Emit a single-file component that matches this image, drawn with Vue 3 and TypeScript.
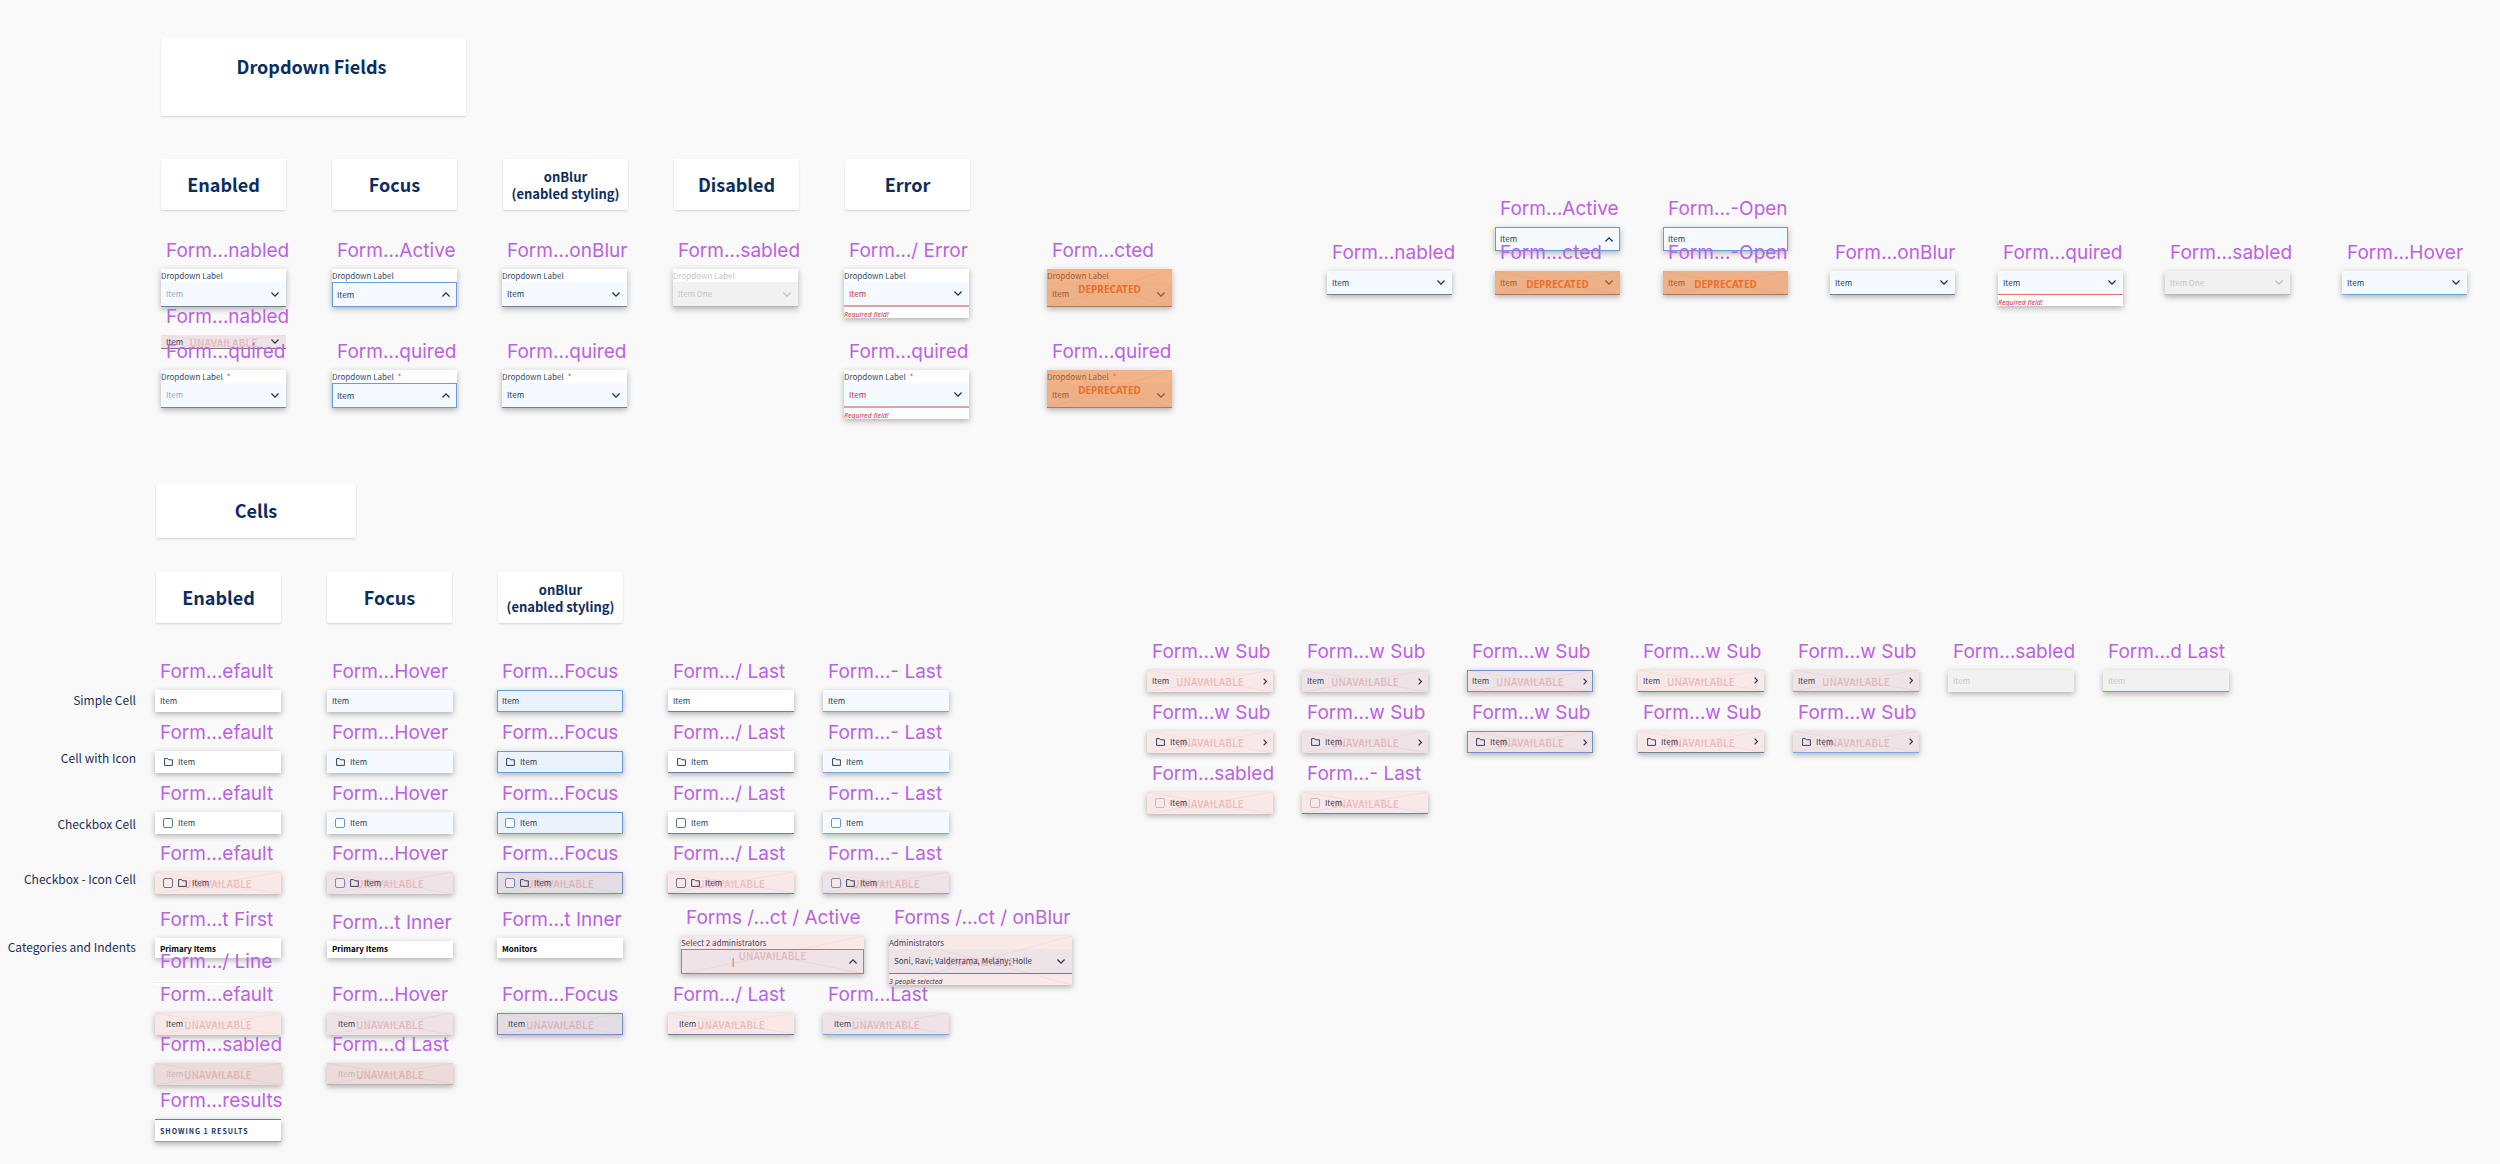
<script setup lang="ts">
type Tone = 'plain' | 'hover' | 'focus' | 'last' | 'hoverLast' | 'disabled' | 'disabledLast'
type Stamp = 'unavailable' | 'deprecated'

interface Frame {
  x: number
  y: number
  name: string
  kind: 'field' | 'cell' | 'category' | 'line' | 'results'
  text?: string
  /** caption above the field */
  caption?: string
  required?: boolean
  note?: string
  state?: 'normal' | 'placeholder' | 'active' | 'disabled' | 'error' | 'required' | 'hover'
  arrow?: 'down' | 'up' | 'faint' | 'none'
  stamp?: Stamp
  size?: 'wide' | 'slim' | 'tall'
  tone?: Tone
  check?: boolean
  folder?: boolean
  indent?: boolean
  sub?: boolean
  editable?: boolean
}

const frames: Frame[] = []
const add = (x: number, y: number, name: string, kind: Frame['kind'], rest: Partial<Frame> = {}) => {
  frames.push({ x, y, name, kind, text: 'Item', ...rest })
}

// Labelled dropdowns
const caption = 'Dropdown Label'
const deprecated: Partial<Frame> = { stamp: 'deprecated' }
add(161, 269, 'Form…nabled', 'field', { caption, state: 'placeholder' })
add(332, 269, 'Form…Active', 'field', { caption, state: 'active', arrow: 'up' })
add(502, 269, 'Form…onBlur', 'field', { caption })
add(673, 269, 'Form…sabled', 'field', { caption, state: 'disabled', text: 'Item One' })
add(844, 269, 'Form…/ Error', 'field', { caption, state: 'error', note: 'Required field!' })
add(1047, 269, 'Form…cted', 'field', { caption, ...deprecated })
add(161, 335, 'Form…nabled', 'field', { size: 'slim', stamp: 'unavailable' })
add(161, 370, 'Form…quired', 'field', { caption, required: true, state: 'placeholder' })
add(332, 370, 'Form…quired', 'field', { caption, required: true, state: 'active', arrow: 'up' })
add(502, 370, 'Form…quired', 'field', { caption, required: true })
add(844, 370, 'Form…quired', 'field', { caption, required: true, state: 'error', note: 'Required field!' })
add(1047, 370, 'Form…quired', 'field', { caption, required: true, ...deprecated })

// Bare dropdowns
add(1327, 271, 'Form…nabled', 'field')
add(1495, 227, 'Form…Active', 'field', { state: 'active', arrow: 'up' })
add(1663, 227, 'Form…-Open', 'field', { state: 'active', arrow: 'faint' })
add(1495, 271, 'Form…cted', 'field', deprecated)
add(1663, 271, 'Form…-Open', 'field', { ...deprecated, arrow: 'none' })
add(1830, 271, 'Form…onBlur', 'field')
add(1998, 271, 'Form…quired', 'field', { state: 'required', note: 'Required field!' })
add(2165, 271, 'Form…sabled', 'field', { state: 'disabled', text: 'Item One' })
add(2342, 271, 'Form…Hover', 'field', { state: 'hover' })

// Cell matrix
const columns: { x: number; name: string; tone: Tone }[] = [
  { x: 155, name: 'Form…efault', tone: 'plain' },
  { x: 327, name: 'Form…Hover', tone: 'hover' },
  { x: 497, name: 'Form…Focus', tone: 'focus' },
  { x: 668, name: 'Form…/ Last', tone: 'last' },
  { x: 823, name: 'Form…- Last', tone: 'hoverLast' },
]
const rows: { y: number; extra: Partial<Frame> }[] = [
  { y: 690, extra: {} },
  { y: 751, extra: { folder: true } },
  { y: 812, extra: { check: true } },
  { y: 872, extra: { check: true, folder: true, stamp: 'unavailable' } },
]
for (const row of rows) for (const c of columns) add(c.x, row.y, c.name, 'cell', { tone: c.tone, ...row.extra })

add(155, 938, 'Form…t First', 'category', { text: 'Primary Items', size: 'tall' })
add(327, 941, 'Form…t Inner', 'category', { text: 'Primary Items' })
add(497, 938, 'Form…t Inner', 'category', { text: 'Monitors', size: 'tall' })
add(681, 936, 'Forms /…ct / Active', 'field', {
  caption: 'Select 2 administrators', state: 'active', arrow: 'up', size: 'wide', stamp: 'unavailable', text: '|', editable: true,
})
add(889, 936, 'Forms /…ct / onBlur', 'field', {
  caption: 'Administrators', size: 'wide', stamp: 'unavailable', text: 'Soni, Ravi; Valderrama, Melany; Holle', note: '3 people selected',
})
add(155, 980, 'Form…/ Line', 'line')
for (const c of columns) {
  const name = c.tone === 'hoverLast' ? 'Form…Last' : c.name
  add(c.x, 1013, name, 'cell', { tone: c.tone, indent: true, stamp: 'unavailable' })
}
add(155, 1063, 'Form…sabled', 'cell', { tone: 'disabled', indent: true, stamp: 'unavailable' })
add(327, 1063, 'Form…d Last', 'cell', { tone: 'disabledLast', indent: true, stamp: 'unavailable' })
add(155, 1119, 'Form…results', 'results', { text: 'SHOWING 1 RESULTS' })

// Cells that open a sub menu
const subColumns: { x: number; tone: Tone }[] = [
  { x: 1147, tone: 'plain' },
  { x: 1302, tone: 'hover' },
  { x: 1467, tone: 'focus' },
  { x: 1638, tone: 'last' },
  { x: 1793, tone: 'hoverLast' },
]
for (const y of [670, 731]) {
  for (const c of subColumns) {
    add(c.x, y, 'Form…w Sub', 'cell', { tone: c.tone, sub: true, folder: y === 731, stamp: 'unavailable' })
  }
}
add(1948, 670, 'Form…sabled', 'cell', { tone: 'disabled' })
add(2103, 670, 'Form…d Last', 'cell', { tone: 'disabledLast' })
add(1147, 792, 'Form…sabled', 'cell', { tone: 'plain', check: true, stamp: 'unavailable', state: 'disabled' })
add(1302, 792, 'Form…- Last', 'cell', { tone: 'last', check: true, stamp: 'unavailable', state: 'disabled' })

const rowLabels = [
  { y: 700, text: 'Simple Cell' },
  { y: 758, text: 'Cell with Icon' },
  { y: 824, text: 'Checkbox Cell' },
  { y: 879, text: 'Checkbox - Icon Cell' },
  { y: 947, text: 'Categories and Indents' },
]

const arrowOf = (f: Frame) => f.arrow ?? 'down'
const isDisabled = (f: Frame) => f.state === 'disabled' || f.tone === 'disabled' || f.tone === 'disabledLast'
</script>

<template>
  <main class="canvas">
    <section class="group">
      <h1 class="tile tile-title">Dropdown Fields</h1>
      <div class="tiles">
        <h2 class="tile">Enabled</h2>
        <h2 class="tile">Focus</h2>
        <h2 class="tile tile-small">onBlur<br />(enabled styling)</h2>
        <h2 class="tile">Disabled</h2>
        <h2 class="tile">Error</h2>
      </div>
    </section>

    <section class="group group-cells">
      <h1 class="tile tile-cells">Cells</h1>
      <div class="tiles">
        <h2 class="tile">Enabled</h2>
        <h2 class="tile">Focus</h2>
        <h2 class="tile tile-small">onBlur<br />(enabled styling)</h2>
      </div>
    </section>

    <p v-for="r in rowLabels" :key="r.text" class="row-label" :style="{ top: r.y - 9 + 'px' }">{{ r.text }}</p>

    <article
      v-for="(f, i) in frames"
      :key="i"
      class="frame"
      :class="[f.kind, f.size]"
      :style="{ left: f.x + 'px', top: f.y - 30 + 'px' }"
    >
      <h3 class="frame-name">{{ f.name }}</h3>

      <div v-if="f.kind === 'field'" class="card" :class="[f.state ?? 'normal', { captioned: f.caption }]">
        <label v-if="f.caption" class="caption" :for="'control-' + i">
          {{ f.caption }}<span v-if="f.required" class="star">*</span>
        </label>
        <div class="control">
          <input v-if="f.editable" :id="'control-' + i" class="value value-input" type="text" :value="f.text" />
          <select v-else :id="'control-' + i" class="value" :aria-label="f.caption ? undefined : f.name" :disabled="isDisabled(f)">
            <option>{{ f.text }}</option>
          </select>
          <svg v-if="arrowOf(f) !== 'none'" class="arrow" :class="arrowOf(f)" viewBox="0 0 8 5">
            <path v-if="arrowOf(f) === 'down'" d="M.4.5 4 4.1 7.6.5" />
            <path v-else d="M.4 4.5 4 .9l3.6 3.6" />
          </svg>
        </div>
        <p v-if="f.note" class="note" :class="{ 'note-info': f.size === 'wide' }">{{ f.note }}</p>
        <div v-if="f.stamp" class="stamp" :class="f.stamp">
          <svg class="cross" viewBox="0 0 100 100" preserveAspectRatio="none"><path d="M0 0 100 100M100 0 0 100" /></svg>
          <span>{{ f.stamp.toUpperCase() }}</span>
        </div>
      </div>

      <component
        :is="f.check ? 'label' : 'button'"
        v-else-if="f.kind === 'cell'"
        class="card cell-card"
        :class="[f.tone, { indent: f.indent, 'has-sub': f.sub }]"
        :disabled="!f.check && isDisabled(f) ? true : undefined"
      >
        <input v-if="f.check" class="check" type="checkbox" :disabled="isDisabled(f)" />
        <svg v-if="f.folder" class="folder" :class="{ second: f.check }" viewBox="0 0 9 8">
          <path d="M.6.6h3l1 1.2h3.8v5.6H.6z" />
        </svg>
        <span class="cell-text">{{ f.text }}</span>
        <svg v-if="f.sub" class="sub" viewBox="0 0 4 7"><path d="M.6.6 3.4 3.5.6 6.4" /></svg>
        <span v-if="f.stamp" class="stamp" :class="f.stamp">
          <svg class="cross" viewBox="0 0 100 100" preserveAspectRatio="none"><path d="M0 0 100 100M100 0 0 100" /></svg>
          <span>{{ f.stamp.toUpperCase() }}</span>
        </span>
      </component>

      <p v-else-if="f.kind === 'category'" class="card category-card">{{ f.text }}</p>
      <div v-else-if="f.kind === 'line'" class="line-card"><hr /></div>
      <p v-else class="card results-card">{{ f.text }}</p>
    </article>
  </main>
</template>

<style>
body {
  margin: 0;
  background: #f9f9f9;
}
</style>

<style scoped>
.canvas {
  position: relative;
  box-sizing: border-box;
  min-height: 100vh;
  padding: 38px 0;
  overflow: hidden;
  background: #f9f9f9;
  color: #223a5a;
  font-family: "Noto Sans CJK SC", "Noto Sans", sans-serif;
  font-size: 8px;
  line-height: 12px;
}
.canvas *,
.canvas *::before {
  box-sizing: border-box;
}
h1, h2, h3, p {
  margin: 0;
}

/* heading tiles */
.group {
  padding-left: 161px;
}
.group-cells {
  margin-top: 273px;
  padding-left: 156px;
}
.tiles {
  display: flex;
  gap: 46px;
  margin-top: 43px;
}
.group-cells .tiles {
  margin-top: 34px;
}
.tile {
  display: flex;
  align-items: center;
  justify-content: center;
  width: 125px;
  min-height: 51px;
  padding-bottom: 2px;
  border-radius: 2px;
  background: #fff;
  box-shadow: 0 1px 2px rgba(20, 30, 60, .18);
  color: #0b2d5e;
  font-size: 18px;
  font-weight: 700;
  line-height: 24px;
  text-align: center;
}
.tile-title {
  align-items: flex-start;
  width: 305px;
  min-height: 78px;
  padding: 16px 4px 0 0;
}
.tile-cells {
  width: 200px;
  min-height: 55px;
}
.tile-small {
  padding-bottom: 0;
  font-size: 13px;
  line-height: 17px;
}

.row-label {
  position: absolute;
  left: 0;
  width: 136px;
  color: #1d2f5c;
  font-size: 12px;
  line-height: 18px;
  text-align: right;
  white-space: nowrap;
}

/* frames on the canvas */
.frame {
  position: absolute;
  width: 125px;
}
.frame.cell,
.frame.category,
.frame.line,
.frame.results {
  width: 126px;
}
.frame.wide {
  width: 183px;
}
.frame-name {
  position: relative;
  z-index: 1;
  height: 24px;
  margin: 0 0 6px 5px;
  color: #bb62e2;
  font-family: Inter, sans-serif;
  font-size: 19px;
  font-weight: 400;
  line-height: 24px;
  white-space: nowrap;
}
.card {
  position: relative;
  background: #fff;
  box-shadow: 0 2px 6px rgba(0, 0, 0, .3);
}

/* dropdown fields */
.caption {
  display: block;
  height: 13px;
  line-height: 13px;
  color: #2f4767;
}
.star {
  margin-left: 4px;
  color: #e03a3a;
}
.control {
  display: flex;
  align-items: center;
  height: 24px;
  border-bottom: 1px solid #6c839f;
  background: #f4faff;
}
.captioned .control {
  height: 25px;
}
.slim .card {
  box-shadow: none;
}
.slim .control {
  height: 14px;
}
.value {
  flex: 1;
  min-width: 0;
  height: 100%;
  margin: 0;
  padding: 0 5px;
  border: 0;
  border-radius: 0;
  outline: 0;
  appearance: none;
  background: transparent;
  color: #223a5a;
  font: inherit;
  opacity: 1;
}
.value-input {
  padding-left: 50px;
}
.arrow {
  flex: none;
  width: 8px;
  height: 5px;
  margin-right: 7px;
  fill: none;
  stroke: #1b3354;
  stroke-width: 1.3;
}
.arrow.faint {
  stroke: #fff;
}
.placeholder .value {
  color: #9aa7b8;
}
.active .control {
  border: 1px solid #669bdc;
}
.active .value {
  padding-left: 4px;
}
.active .value-input {
  padding-left: 50px;
}
.active .arrow {
  margin-right: 6px;
}
.hover .control {
  border-bottom-color: #6aa3e6;
}
.disabled .caption,
.disabled .value {
  color: #c6c6c6;
}
.disabled .control {
  border-bottom-color: #b5b5b5;
  background: #f1f1f1;
}
.disabled .arrow {
  stroke: #c0c0c0;
}
.error .value {
  color: #c8323c;
}
.error .control {
  border-bottom: 2px solid #e2a0a2;
}
.required .control {
  border-bottom-color: #e5706e;
}
.note {
  height: 11px;
  padding-top: 3px;
  overflow: hidden;
  color: #cc3338;
  font-family: "Noto Sans", sans-serif;
  font-size: 7px;
  font-style: italic;
  line-height: 10px;
}
.note-info {
  color: #223a5a;
}

/* cells */
.cell-card {
  display: flex;
  align-items: center;
  width: 100%;
  height: 22px;
  margin: 0;
  padding: 0 5px;
  border: 0 solid #6c839f;
  color: #223a5a;
  font: inherit;
  text-align: left;
}
.indent {
  padding-left: 11px;
}
.hover.cell-card {
  background: #f4faff;
}
.focus.cell-card {
  border: 1px solid #6a9bdc;
  padding-left: 4px;
  padding-right: 4px;
  background: #eaf3fd;
}
.focus.cell-card.has-sub {
  background: #f4faff;
}
.focus.cell-card.indent {
  padding-left: 10px;
}
.last {
  border-bottom-width: 1px;
}
.hoverLast {
  border-bottom: 1px solid #74a8e4;
  background: #f4faff;
}
.cell-card.disabled,
.disabledLast {
  background: #f1f1f1;
  color: #c6c6c6;
}
.disabledLast {
  border-bottom: 1px solid #6a9bdc;
}
.disabledLast.indent {
  border-bottom-color: #b5b5b5;
}
.check {
  flex: none;
  width: 10px;
  height: 10px;
  margin: 0 5px 0 3px;
  border: 1px solid #5f7896;
  border-radius: 2px;
  appearance: none;
  background: #fff;
}
.hover .check,
.focus .check,
.hoverLast .check {
  border-color: #5c98e2;
}
.check:disabled {
  border-color: #c9c9c9;
}
.folder {
  flex: none;
  width: 9px;
  height: 8px;
  margin: 0 5px 0 4px;
  fill: none;
  stroke: #2f4260;
  stroke-width: 1;
}
.folder.second {
  margin-left: 0;
}
.cell-text {
  flex: 1;
}
.sub {
  flex: none;
  width: 4px;
  height: 7px;
  margin-right: 1px;
  fill: none;
  stroke: #1b3354;
  stroke-width: 1.2;
}

.category-card {
  height: 17px;
  padding: 2px 5px;
  color: #000;
  font-weight: 700;
}
.tall .category-card {
  height: 20px;
  padding-top: 5px;
}
.line-card {
  height: 5px;
  padding-top: 2px;
  background: #fff;
}
.line-card hr {
  height: 1px;
  margin: 0;
  border: 0;
  background: #ececec;
}
.results-card {
  height: 23px;
  padding: 5px;
  border-top: 1px solid #6c839f;
  border-bottom: 1px solid #8fa1b8;
  color: #14365f;
  font-size: 7px;
  font-weight: 700;
  letter-spacing: 1px;
}

/* status stamps laid over a component */
.stamp {
  position: absolute;
  inset: 0;
  display: flex;
  align-items: center;
  justify-content: center;
  padding-top: 2px;
  font-size: 10px;
  font-weight: 700;
  line-height: 14px;
  pointer-events: none;
}
.focus > .stamp {
  inset: -1px;
}
.unavailable {
  background: rgba(197, 63, 55, .12);
  color: rgba(208, 84, 92, .28);
}
.deprecated {
  background: rgba(233, 115, 37, .55);
  color: #e8702a;
  font-family: "Noto Sans", sans-serif;
}
.cross {
  position: absolute;
  inset: 0;
  width: 100%;
  height: 100%;
  fill: none;
  stroke: rgba(200, 80, 60, .07);
}
.cross path {
  vector-effect: non-scaling-stroke;
}
</style>
